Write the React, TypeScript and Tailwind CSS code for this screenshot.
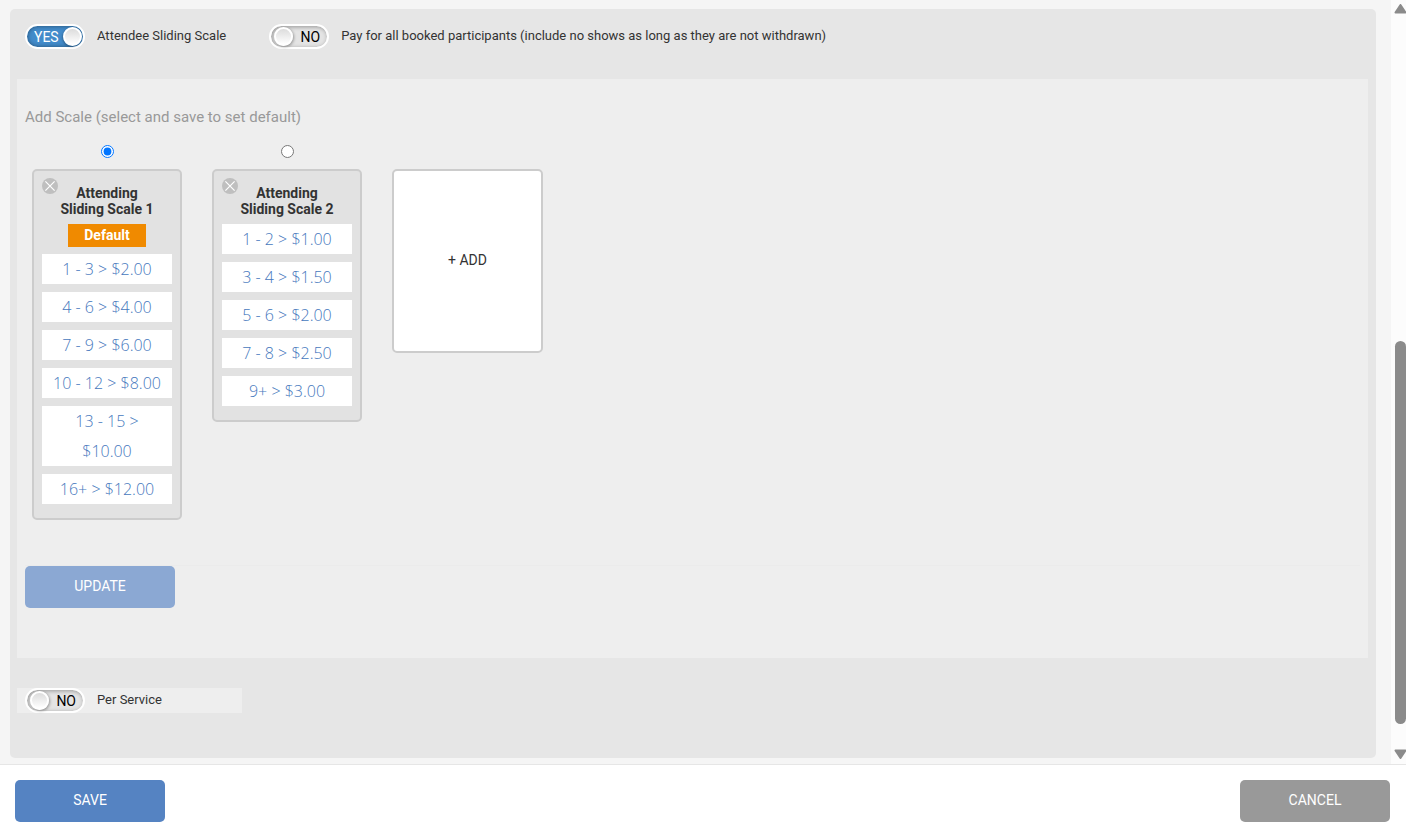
import { useState } from "react";

type Scale = { id: string; name: string[]; isDefault?: boolean; tiers: string[] };

const scales: Scale[] = [
  {
    id: "scale-1",
    name: ["Attending", "Sliding Scale 1"],
    isDefault: true,
    tiers: ["1 - 3 > $2.00", "4 - 6 > $4.00", "7 - 9 > $6.00", "10 - 12 > $8.00", "13 - 15 > $10.00", "16+ > $12.00"],
  },
  {
    id: "scale-2",
    name: ["Attending", "Sliding Scale 2"],
    tiers: ["1 - 2 > $1.00", "3 - 4 > $1.50", "5 - 6 > $2.00", "7 - 8 > $2.50", "9+ > $3.00"],
  },
];

function Toggle({ label, initial = false }: { label: string; initial?: boolean }) {
  const [on, setOn] = useState(initial);
  return (
    <label className="relative flex h-[25px] cursor-pointer items-center gap-3">
      <input type="checkbox" className="sr-only" checked={on} onChange={() => setOn(!on)} />
      {on ? (
        <span className="flex h-[25px] w-[60px] shrink-0 items-center justify-between rounded-full border-2 border-white bg-[#428bca] pr-px pl-[7px] shadow-[inset_0_0_4px_rgba(0,0,0,0.45)]">
          <span className="text-sm leading-5 text-white">YES</span>
          <span className="size-[19px] rounded-full border-2 border-white bg-linear-to-b from-[#dcdcdc] to-white shadow-[-1px_1px_2px_rgba(0,0,0,0.25)]" />
        </span>
      ) : (
        <span className="flex h-[25px] w-[60px] shrink-0 items-center justify-between rounded-full border-2 border-white bg-[#e4e4e4] pr-[7px] pl-[3px] shadow-[inset_1px_1px_4px_rgba(0,0,0,0.35)]">
          <span className="size-[19px] rounded-full border-2 border-white bg-linear-to-b from-[#dcdcdc] to-white shadow-[1px_1px_3px_rgba(0,0,0,0.35)]" />
          <span className="text-sm leading-5 text-black">NO</span>
        </span>
      )}
      <span className="pb-0.5 text-[13px] leading-5 text-[#333]">{label}</span>
    </label>
  );
}

function ScaleCard({ scale, selected, onSelect }: { scale: Scale; selected: boolean; onSelect: () => void }) {
  return (
    <div className="flex w-[150px] flex-col items-center gap-[11px]">
      <input
        type="radio"
        name="default-scale"
        aria-label={scale.name.join(" ")}
        checked={selected}
        onChange={onSelect}
        className="size-[13px] accent-[#0075ff]"
      />
      <div className="relative flex w-full flex-col items-center gap-[7px] rounded-[5px] border-2 border-[#ccc] bg-[#e2e2e2] px-2 py-3.5">
        <button type="button" aria-label="Remove scale" className="absolute top-[7px] left-2 size-4 cursor-pointer">
          <svg viewBox="0 0 16 16" className="size-4">
            <circle cx="8" cy="8" r="8" fill="#bfbfbf" />
            <path d="M3.4 3.4 12.6 12.6M12.6 3.4 3.4 12.6" stroke="#fff" strokeWidth="1.2" fill="none" />
          </svg>
        </button>
        <h3 className="text-center text-sm leading-4 font-bold text-[#333]">
          {scale.name.map((line) => (
            <span key={line} className="block">{line}</span>
          ))}
        </h3>
        {scale.isDefault && (
          <span className="h-[23px] w-[78px] bg-[#f08a00] text-center text-sm leading-[23px] font-bold text-white">Default</span>
        )}
        <ul className="flex w-full flex-col gap-2">
          {scale.tiers.map((tier) => (
            <li key={tier} className="bg-white px-2.5 text-center font-['Open_Sans',sans-serif] text-base leading-[30px] font-light text-[#4678bd]">
              {tier}
            </li>
          ))}
        </ul>
      </div>
    </div>
  );
}

function ScrollTrack() {
  return (
    <div aria-hidden="true" className="flex w-[15px] shrink-0 flex-col items-end overflow-hidden bg-[#fcfcfc] pt-1 pb-[5px]">
      <svg viewBox="0 0 12 10" className="h-2.5 w-3 shrink-0">
        <path d="M6.5 1 11.5 8.5H1.5Z" fill="#8b8b8b" stroke="#8b8b8b" strokeWidth="2" strokeLinejoin="round" />
      </svg>
      <div className="grow-[327]" />
      <div className="w-[11px] grow-[383] rounded-full bg-[#8b8b8b]" />
      <div className="grow-[25]" />
      <svg viewBox="0 0 12 10" className="h-2.5 w-3 shrink-0">
        <path d="M6.5 9 11.5 1.5H1.5Z" fill="#8b8b8b" stroke="#8b8b8b" strokeWidth="2" strokeLinejoin="round" />
      </svg>
    </div>
  );
}

const buttonBase = "h-[42px] w-[150px] cursor-pointer rounded-[5px] pb-0.5 text-sm text-white";

export default function App() {
  const [selected, setSelected] = useState("scale-1");
  return (
    <div className="flex min-h-screen flex-col bg-white font-[Roboto,sans-serif]">
      <div className="flex flex-1">
        <main className="flex min-w-0 flex-1 bg-[#f5f5f5] pt-[9px] pr-[15px] pb-1.5 pl-2.5">
          <div className="flex-1 rounded-[5px] bg-[#e6e6e6] pt-[15px] pr-2 pb-[45px] pl-[7px]">
            <div className="flex flex-wrap gap-x-[43px] pl-2">
              <Toggle label="Attendee Sliding Scale" initial />
              <Toggle label="Pay for all booked participants (include no shows as long as they are not withdrawn)" />
            </div>

            <section className="mt-[30px] bg-[#eee] px-2 pt-[26px] pb-[50px]">
              <h2 className="text-[15px] leading-6 text-[#999]">Add Scale (select and save to set default)</h2>
              <div className="mt-4 flex flex-wrap items-start gap-[30px] pl-[7px]">
                {scales.map((scale) => (
                  <ScaleCard key={scale.id} scale={scale} selected={selected === scale.id} onSelect={() => setSelected(scale.id)} />
                ))}
                <button
                  type="button"
                  className="mt-6 h-[184px] w-[151px] cursor-pointer rounded-[5px] border-2 border-[#ccc] bg-white pb-0.5 text-sm text-[#333]"
                >
                  + ADD
                </button>
              </div>
              <div className="mt-[45px] border-t border-[#ebebeb]">
                <button type="button" className={`${buttonBase} bg-[#8ba8d3]`}>UPDATE</button>
              </div>
            </section>

            <div className="mt-[30px] w-[225px] bg-[#eee] pl-2">
              <Toggle label="Per Service" />
            </div>
          </div>
        </main>
        <ScrollTrack />
      </div>

      <footer className="flex justify-between border-t border-[#e6e6e6] pt-[15px] pr-4 pb-[11px] pl-[15px]">
        <button type="button" className={`${buttonBase} bg-[#5583c2]`}>SAVE</button>
        <button type="button" className={`${buttonBase} bg-[#999]`}>CANCEL</button>
      </footer>
    </div>
  );
}
